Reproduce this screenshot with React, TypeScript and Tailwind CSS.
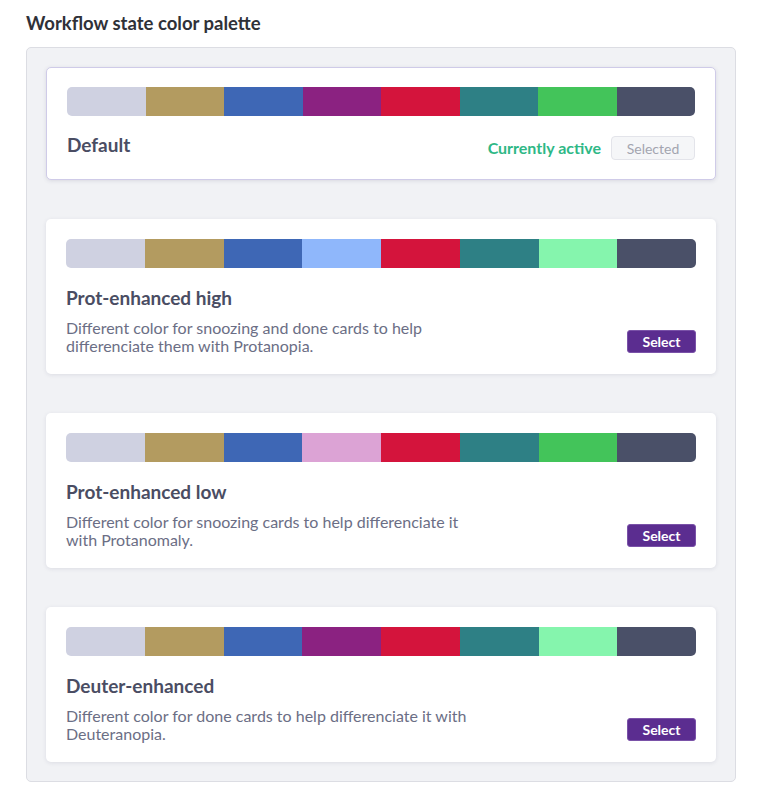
import React from 'react'

const BASE = ['#cfd1e1', '#b39b60', '#3e67b5', '#8b2281', '#d4143c', '#2e8085', '#43c45a', '#4a5068']

type Palette = {
  name: string
  description?: string
  colors: string[]
  active?: boolean
}

const palettes: Palette[] = [
  { name: 'Default', colors: BASE, active: true },
  {
    name: 'Prot-enhanced high',
    description: 'Different color for snoozing and done cards to help differenciate them with Protanopia.',
    colors: ['#cfd1e1', '#b39b60', '#3e67b5', '#8fb7fb', '#d4143c', '#2e8085', '#85f5ad', '#4a5068'],
  },
  {
    name: 'Prot-enhanced low',
    description: 'Different color for snoozing cards to help differenciate it with Protanomaly.',
    colors: ['#cfd1e1', '#b39b60', '#3e67b5', '#dca3d5', '#d4143c', '#2e8085', '#43c45a', '#4a5068'],
  },
  {
    name: 'Deuter-enhanced',
    description: 'Different color for done cards to help differenciate it with Deuteranopia.',
    colors: ['#cfd1e1', '#b39b60', '#3e67b5', '#8b2281', '#d4143c', '#2e8085', '#85f5ad', '#4a5068'],
  },
]

function ColorBar({ colors }: { colors: string[] }) {
  return (
    <div className="flex h-[29px] rounded-[5px] overflow-hidden">
      {colors.map((c, i) => (
        <div key={i} className="flex-1" style={{ backgroundColor: c }} />
      ))}
    </div>
  )
}

function PaletteCard({ p }: { p: Palette }) {
  if (p.active) {
    return (
      <div className="bg-white rounded-[5px] border border-[#cfcbe8] shadow-[0_1px_4px_rgba(40,40,80,0.12)] px-5 pt-[19px] pb-[19px]">
        <ColorBar colors={p.colors} />
        <div className="flex items-start justify-between mt-5">
          <h3 className="text-[19px] font-bold text-[#4a4d63] leading-[18px]">{p.name}</h3>
          <div className="flex items-center gap-[10px]">
            <span className="text-[16px] font-bold text-[#2eb886]">Currently active</span>
            <span className="h-6 w-[84px] flex items-center justify-center rounded-[4px] border border-[#e3e4ea] bg-[#f5f6f8] text-[14px] text-[#a3a5b0]">
              Selected
            </span>
          </div>
        </div>
      </div>
    )
  }
  return (
    <div className="bg-white rounded-[5px] shadow-[0_1px_4px_rgba(40,40,80,0.1)] px-5 pt-5 pb-[19px]">
      <ColorBar colors={p.colors} />
      <h3 className="mt-[18px] text-[19px] font-bold text-[#4a4d63] leading-6">{p.name}</h3>
      <div className="flex items-end justify-between mt-[9px]">
        <p className="w-[415px] text-[16px] leading-[18px] text-[#6b6e85]">{p.description}</p>
        <button className="h-[23px] w-[69px] rounded-[3px] bg-[#5b2d90] border border-[#7a52a8] text-white text-[14px] font-bold leading-none mb-[2px]">
          Select
        </button>
      </div>
    </div>
  )
}

export default function App() {
  return (
    <div className="min-h-screen bg-white px-[26px] pt-[11px] font-['Lato',sans-serif]">
      <h2 className="text-[18.5px] font-bold text-[#2f3138] leading-6">Workflow state color palette</h2>
      <div className="mt-3 w-[710px] rounded-[5px] border border-[#dcdde3] bg-[#f1f2f5] px-[19px] pt-[19px] pb-[19px] flex flex-col gap-[39px]">
        {palettes.map((p) => (
          <PaletteCard key={p.name} p={p} />
        ))}
      </div>
    </div>
  )
}
